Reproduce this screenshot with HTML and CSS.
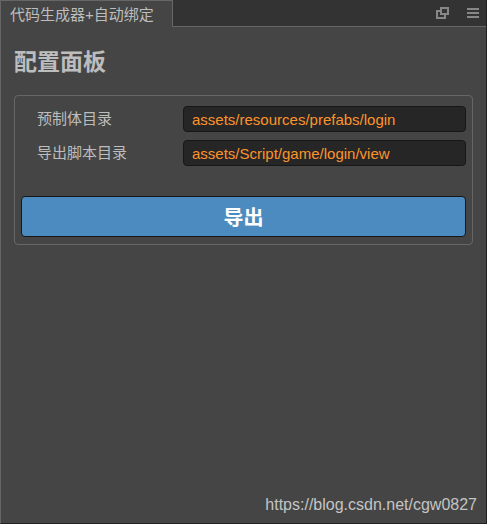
FILE: index.html
```html
<!DOCTYPE html>
<html lang="zh-CN">
<head>
  <meta charset="UTF-8">
  <title>代码生成器+自动绑定</title>
  <link rel="stylesheet" href="styles.css">
</head>
<body>

  <div class="dock">
    <header class="tab-bar">
      <div class="tab">代码生成器+自动绑定</div>
      <div class="tab-actions">
        <button type="button" class="icon-btn" aria-label="弹出窗口">
          <svg width="14" height="14" viewBox="0 0 14 14" fill="none" stroke="#878787" stroke-width="2">
            <path d="M5 2h7v6H5z"/>
            <path d="M4 5H1v7h8V9"/>
          </svg>
        </button>
        <button type="button" class="icon-btn" aria-label="菜单">
          <svg width="14" height="14" viewBox="0 0 14 14" fill="#878787">
            <path d="M1 2h12v2H1zM1 6h12v2H1zM1 10h12v2H1z"/>
          </svg>
        </button>
      </div>
    </header>

    <main class="content">
      <h2>配置面板</h2>
      <form class="panel">
        <div class="prop">
          <label for="prefabPath">预制体目录</label>
          <input type="text" id="prefabPath" value="assets/resources/prefabs/login" spellcheck="false">
        </div>
        <div class="prop">
          <label for="scriptPath">导出脚本目录</label>
          <input type="text" id="scriptPath" value="assets/Script/game/login/view" spellcheck="false">
        </div>
        <button type="button" class="export-btn">导出</button>
      </form>
    </main>

    <footer class="source">https://blog.csdn.net/cgw0827</footer>
  </div>

</body>
</html>
```

FILE: styles.css
```css
* {
  box-sizing: border-box;
}
body {
  margin: 0;
  background: #454545;
  color: #bdbdbd;
  font-family: "Liberation Sans", "Noto Sans CJK SC", sans-serif;
  font-size: 15px;
}
.dock {
  display: flex;
  flex-direction: column;
  min-height: 100vh;
  border-left: 1px solid #666;
  border-right: 1px solid #222;
  border-bottom: 1px solid #222;
}
.tab-bar {
  display: flex;
  height: 27px;
  background: #333;
}
.tab {
  padding: 0 18px 0 9px;
  border-top: 1px solid #666;
  border-right: 1px solid #666;
  background: #454545;
  line-height: 28px;
  white-space: nowrap;
}
.tab-actions {
  display: flex;
  flex: 1;
  justify-content: flex-end;
  align-items: center;
  gap: 16px;
  padding-right: 6px;
  border-bottom: 1px solid #666;
}
.icon-btn {
  display: block;
  padding: 0;
  border: none;
  background: none;
  line-height: 0;
  cursor: pointer;
}
.content {
  flex: 1;
  padding: 19px 13px 0;
}
h2 {
  margin: 0 0 16px;
  font-size: 23px;
  line-height: 33px;
}
.panel {
  padding: 10px 6px 7px;
  border: 1px solid #666;
  border-radius: 4px;
}
.prop {
  display: flex;
  align-items: center;
  margin-bottom: 8px;
}
.prop label {
  width: 162px;
  padding-left: 16px;
  line-height: 26px;
}
.prop input {
  flex: 1;
  min-width: 0;
  height: 26px;
  padding: 0 8px;
  border: 1px solid #171717;
  border-radius: 4px;
  background: #262626;
  color: #fd942b;
  font: inherit;
}
.export-btn {
  display: block;
  width: 100%;
  height: 41px;
  margin-top: 30px;
  padding: 0;
  border: 1px solid #171717;
  border-radius: 4px;
  background: #4c8bbf;
  color: #fff;
  font: bold 20px "Noto Sans CJK SC", sans-serif;
  line-height: 39px;
  cursor: pointer;
}
.source {
  padding: 0 9px 8px;
  color: #c4c4c4;
  font-size: 16px;
  line-height: 20px;
  text-align: right;
}
```
